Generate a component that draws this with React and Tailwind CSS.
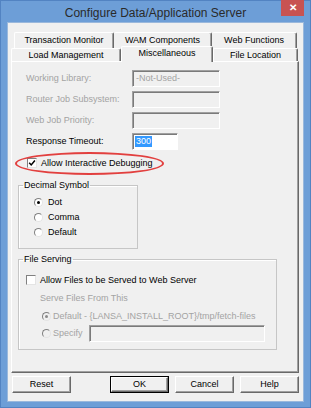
import { useState } from 'react'

// Classic Win32 dialog: "Configure Data/Application Server"

const FONT = { fontFamily: '"Liberation Sans", Arial, sans-serif' }

function Radio({ checked, disabled }) {
  return (
    <span
      className={
        'flex w-[9px] h-[9px] shrink-0 items-center justify-center rounded-full border border-t-[#808080] border-l-[#808080] border-r-[#e4e4e4] border-b-[#e4e4e4] ' +
        (disabled ? 'bg-[#f0f0f0]' : 'bg-white')
      }
    >
      {checked && (
        <span className={'w-[3px] h-[3px] rounded-full ' + (disabled ? 'bg-[#8a8a8a]' : 'bg-black')} />
      )}
    </span>
  )
}

function Checkbox({ checked }) {
  return (
    <span className="flex w-[10px] h-[10px] shrink-0 items-center justify-center border border-t-[#808080] border-l-[#808080] border-r-[#e4e4e4] border-b-[#e4e4e4] bg-white">
      {checked && (
        <svg width="8" height="8" viewBox="0 0 8 8">
          <path d="M1.2 3.8 L3.2 5.9 L6.9 1.4" fill="none" stroke="#000" strokeWidth="1.5" />
        </svg>
      )}
    </span>
  )
}

function Field({ label, disabled, children, width = 'w-[88px]', white }) {
  return (
    <div className="flex h-[17px] items-center">
      <span className={'w-[106px] ' + (disabled ? 'text-[#a3a3a3]' : 'text-black')}>{label}</span>
      <div
        className={
          'flex h-[17px] items-center border border-t-[#a0a0a0] border-l-[#a0a0a0] border-r-white border-b-white shadow-[inset_1px_1px_0_#7a7a7a] ' +
          width +
          (white ? ' bg-white' : ' bg-[#f0f0f0]')
        }
      >
        {children}
      </div>
    </div>
  )
}

function Tab({ label, width, selected }) {
  return (
    <div
      className={
        'flex items-center justify-center rounded-t-[2px] border-t border-l border-r border-t-white border-l-white border-r-[#696969] bg-[#f0f0f0] shadow-[inset_-1px_0_0_#a0a0a0] ' +
        width +
        (selected ? ' relative z-10 h-[16px] -mt-[2px] -mb-[1px] pb-[2px]' : ' h-[13px]')
      }
    >
      {label}
    </div>
  )
}

function Button({ label, isDefault }) {
  return (
    <div className={'h-[17px] w-[59px] ' + (isDefault ? 'border border-black' : '')}>
      <div className="flex h-full w-full items-center justify-center border border-t-white border-l-white border-r-[#696969] border-b-[#696969] bg-[#f0f0f0] shadow-[inset_-1px_-1px_0_#a0a0a0]">
        {label}
      </div>
    </div>
  )
}

export default function App() {
  const [debug] = useState(true)

  return (
    <div
      className="w-[311px] h-[408px] bg-[#6d9ed7] shadow-[inset_0_0_0_1px_#5283c2] text-[9px] leading-[11px] text-black overflow-hidden"
      style={FONT}
    >
      {/* Title bar */}
      <div className="grid h-[22px] grid-cols-[1fr_auto_1fr]">
        <div />
        <div className="pt-[6px] text-[12px] leading-[14px] text-[#2a2a2a]">Configure Data/Application Server</div>
        <div className="flex justify-end pr-[7px]">
          <div className="flex h-[16px] w-[23px] items-center justify-center bg-[#c85352] text-[10px] font-bold leading-none text-white">
            ✕
          </div>
        </div>
      </div>

      {/* Client area */}
      <div className="mx-[7px] flex h-[380px] flex-col border border-[#9ab8dc] bg-[#f0f0f0]">
        {/* Tab rows */}
        <div className="mt-[9px] flex h-[16px] pl-[6px]">
          <div className="flex h-[16px] w-[100px] items-start justify-center rounded-t-[2px] border-t border-l border-r border-t-white border-l-white border-r-[#696969] pt-[2px] shadow-[inset_-1px_0_0_#a0a0a0]">
            Transaction Monitor
          </div>
          <div className="flex h-[16px] w-[98px] items-start justify-center rounded-t-[2px] border-t border-r border-t-white border-r-[#696969] pt-[2px] shadow-[inset_-1px_0_0_#a0a0a0]">
            WAM Components
          </div>
          <div className="flex h-[16px] w-[85px] items-start justify-center rounded-t-[2px] border-t border-r border-t-white border-r-[#696969] pt-[2px] shadow-[inset_-1px_0_0_#a0a0a0]">
            Web Functions
          </div>
        </div>
        <div className="flex items-start pl-[3px]">
          <Tab label="Load Management" width="w-[110px]" />
          <Tab label="Miscellaneous" width="w-[92px]" selected />
          <Tab label="File Location" width="w-[85px]" />
        </div>

        {/* Panel */}
        <div className="ml-[3px] flex h-[312px] w-[288px] flex-col border border-t-white border-l-white border-r-[#696969] border-b-[#696969] pl-[6px] shadow-[inset_-1px_-1px_0_#a0a0a0]">
          <div className="mt-[8px] flex flex-col gap-[4px] pl-[8px]">
            <Field label="Working Library:" disabled>
              <span className="pl-[3px] text-[#a3a3a3]">-Not-Used-</span>
            </Field>
            <Field label="Router Job Subsystem:" disabled />
            <Field label="Web Job Priority:" disabled />
            <Field label="Response Timeout:" width="w-[46px]" white>
              <span className="ml-[2px] bg-[#3399ff] px-[1px] text-white">300</span>
            </Field>
          </div>

          {/* Highlighted checkbox */}
          <div className="relative mt-[7px] ml-[9px] flex h-[12px] items-center gap-[4px]">
            <Checkbox checked={debug} />
            <span>Allow Interactive Debugging</span>
            <div className="absolute -left-[12px] -top-[5px] h-[23px] w-[149px] rounded-[50%] border-2 border-[#e2403f]" />
          </div>

          {/* Decimal Symbol */}
          <fieldset className="mt-[11px] h-[69px] w-[120px] border border-[#c6c6c6] shadow-[inset_1px_1px_0_#ffffff]">
            <legend className="ml-[4px] px-[1px]">Decimal Symbol</legend>
            <div className="mt-[4px] flex flex-col pl-[15px]">
              {['Dot', 'Comma', 'Default'].map((o, i) => (
                <div key={o} className="flex h-[15px] items-center gap-[5px]">
                  <Radio checked={i === 0} />
                  <span>{o}</span>
                </div>
              ))}
            </div>
          </fieldset>

          {/* File Serving */}
          <fieldset className="mt-[5px] h-[96px] w-[259px] border border-[#c6c6c6] shadow-[inset_1px_1px_0_#ffffff]">
            <legend className="ml-[4px] px-[1px]">File Serving</legend>
            <div className="mt-[9px] flex h-[12px] items-center gap-[4px] pl-[7px]">
              <Checkbox />
              <span>Allow Files to be Served to Web Server</span>
            </div>
            <div className="mt-[6px] flex h-[12px] items-center pl-[21px] text-[#a3a3a3]">Serve Files From This</div>
            <div className="mt-[6px] flex h-[12px] items-center gap-[2px] pl-[23px] text-[#a3a3a3]">
              <Radio checked disabled />
              <span>Default - {'{LANSA_INSTALL_ROOT}'}/tmp/fetch-files</span>
            </div>
            <div className="mt-[3px] flex h-[17px] items-center pl-[23px] text-[#a3a3a3]">
              <Radio disabled />
              <span className="ml-[2px] w-[36px]">Specify</span>
              <div className="h-[17px] w-[176px] border border-t-[#a0a0a0] border-l-[#a0a0a0] border-r-white border-b-white bg-[#f0f0f0] shadow-[inset_1px_1px_0_#7a7a7a]" />
            </div>
          </fieldset>
        </div>

        {/* Buttons */}
        <div className="mt-[3px] flex px-[4px]">
          <Button label="Reset" />
          <div className="ml-auto flex gap-[6px]">
            <Button label="OK" isDefault />
            <Button label="Cancel" />
            <Button label="Help" />
          </div>
        </div>
      </div>
    </div>
  )
}
